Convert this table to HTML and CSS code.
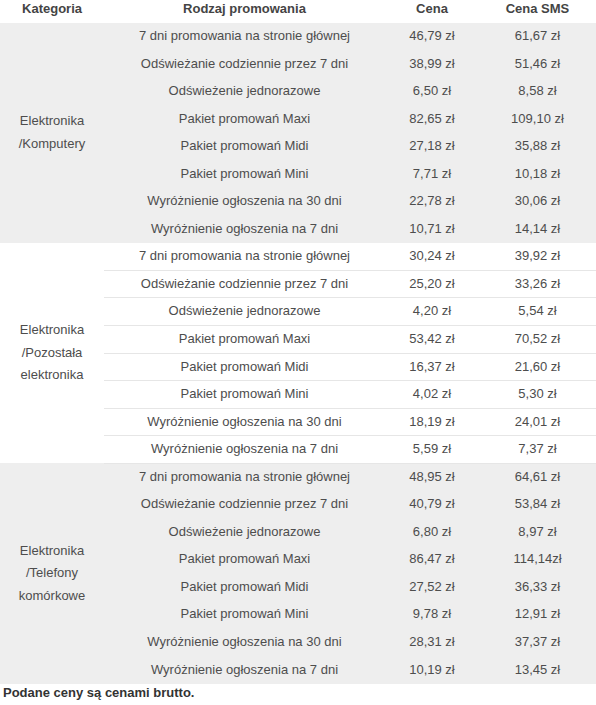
FILE: index.html
```html
<!DOCTYPE html>
<html lang="pl">
<head>
<meta charset="utf-8">
<title>Cennik promowania</title>
<link rel="stylesheet" href="styles.css">
</head>
<body>
<table class="prices">
  <colgroup>
    <col class="c-cat"><col class="c-type"><col class="c-price"><col class="c-sms">
  </colgroup>
  <thead>
    <tr><th>Kategoria</th><th>Rodzaj promowania</th><th>Cena</th><th>Cena SMS</th></tr>
  </thead>
  <tbody class="grp grey">
    <tr><td class="cat" rowspan="8">Elektronika<br>/Komputery</td><td>7 dni promowania na stronie głównej</td><td>46,79 zł</td><td>61,67 zł</td></tr>
    <tr><td>Odświeżanie codziennie przez 7 dni</td><td>38,99 zł</td><td>51,46 zł</td></tr>
    <tr><td>Odświeżenie jednorazowe</td><td>6,50 zł</td><td>8,58 zł</td></tr>
    <tr><td>Pakiet promowań Maxi</td><td>82,65 zł</td><td>109,10 zł</td></tr>
    <tr><td>Pakiet promowań Midi</td><td>27,18 zł</td><td>35,88 zł</td></tr>
    <tr><td>Pakiet promowań Mini</td><td>7,71 zł</td><td>10,18 zł</td></tr>
    <tr><td>Wyróżnienie ogłoszenia na 30 dni</td><td>22,78 zł</td><td>30,06 zł</td></tr>
    <tr><td>Wyróżnienie ogłoszenia na 7 dni</td><td>10,71 zł</td><td>14,14 zł</td></tr>
  </tbody>
  <tbody class="grp white">
    <tr><td class="cat" rowspan="8">Elektronika<br>/Pozostała<br>elektronika</td><td>7 dni promowania na stronie głównej</td><td>30,24 zł</td><td>39,92 zł</td></tr>
    <tr><td>Odświeżanie codziennie przez 7 dni</td><td>25,20 zł</td><td>33,26 zł</td></tr>
    <tr><td>Odświeżenie jednorazowe</td><td>4,20 zł</td><td>5,54 zł</td></tr>
    <tr><td>Pakiet promowań Maxi</td><td>53,42 zł</td><td>70,52 zł</td></tr>
    <tr><td>Pakiet promowań Midi</td><td>16,37 zł</td><td>21,60 zł</td></tr>
    <tr><td>Pakiet promowań Mini</td><td>4,02 zł</td><td>5,30 zł</td></tr>
    <tr><td>Wyróżnienie ogłoszenia na 30 dni</td><td>18,19 zł</td><td>24,01 zł</td></tr>
    <tr><td>Wyróżnienie ogłoszenia na 7 dni</td><td>5,59 zł</td><td>7,37 zł</td></tr>
  </tbody>
  <tbody class="grp grey">
    <tr><td class="cat" rowspan="8">Elektronika<br>/Telefony<br>komórkowe</td><td>7 dni promowania na stronie głównej</td><td>48,95 zł</td><td>64,61 zł</td></tr>
    <tr><td>Odświeżanie codziennie przez 7 dni</td><td>40,79 zł</td><td>53,84 zł</td></tr>
    <tr><td>Odświeżenie jednorazowe</td><td>6,80 zł</td><td>8,97 zł</td></tr>
    <tr><td>Pakiet promowań Maxi</td><td>86,47 zł</td><td>114,14zł</td></tr>
    <tr><td>Pakiet promowań Midi</td><td>27,52 zł</td><td>36,33 zł</td></tr>
    <tr><td>Pakiet promowań Mini</td><td>9,78 zł</td><td>12,91 zł</td></tr>
    <tr><td>Wyróżnienie ogłoszenia na 30 dni</td><td>28,31 zł</td><td>37,37 zł</td></tr>
    <tr><td>Wyróżnienie ogłoszenia na 7 dni</td><td>10,19 zł</td><td>13,45 zł</td></tr>
  </tbody>
</table>
<p class="note">Podane ceny są cenami brutto.</p>
</body>
</html>
```
FILE: styles.css
```css
html, body {
  margin: 0;
  padding: 0;
  background: #ffffff;
  overflow-x: hidden;
}
body {
  font-family: "Liberation Sans", Arial, sans-serif;
  font-size: 13px;
  color: #4d4d4d;
}
.prices {
  width: 596px;
  table-layout: fixed;
  border-collapse: collapse;
  border-spacing: 0;
}
.c-cat { width: 104px; }
.c-type { width: 281px; }
.c-price { width: 94px; }
.c-sms { width: 117px; }
.prices th {
  font-weight: bold;
  color: #444444;
  text-align: center;
  line-height: 17px;
  padding: 0 0 6px;
}
.prices td {
  text-align: center;
  vertical-align: middle;
  line-height: 22.55px;
  padding: 2px 0;
  border-bottom: 1px solid #e6e6e6;
}
.prices td.cat {
  border-bottom: none;
}
.grey td {
  background: #eeeeee;
  border-bottom-color: #eeeeee;
}
.note {
  margin: 0;
  padding: 1px 0 0 3px;
  font-weight: bold;
  color: #333333;
  line-height: 16px;
}
```
